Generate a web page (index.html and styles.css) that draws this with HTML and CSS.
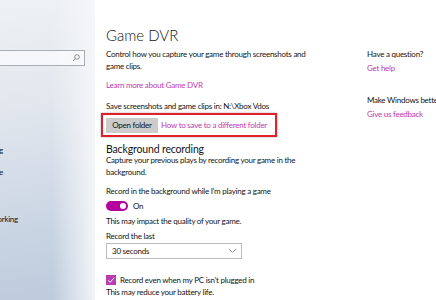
FILE: index.html
```html
<!DOCTYPE html>
<html lang="en">
<head>
  <meta charset="UTF-8">
  <title>Game DVR</title>
  <link rel="stylesheet" href="styles.css">
</head>
<body>
  <div class="window">
    <nav class="side">
      <div class="search">
        <svg width="8" height="8" viewBox="0 0 8 8"><circle cx="5" cy="3" r="2.3" fill="none" stroke="#777" stroke-width="0.8"/><path d="M3.3 4.7 L1 7" stroke="#777" stroke-width="0.9"/></svg>
      </div>
      <ul class="menu">
        <li class="m1"><span>Broadcasting</span></li>
        <li class="m2"><span>Game Mode</span></li>
        <li class="m3"><span>Xbox Networking</span></li>
      </ul>
    </nav>

    <main class="content">
      <h1>Game DVR</h1>
      <p class="desc">Control how you capture your game through screenshots and game clips.</p>
      <a class="link learn">Learn more about Game DVR</a>
      <p class="save">Save screenshots and game clips in: N:\Xbox Vdos</p>
      <div class="highlight">
        <button class="btn">Open folder</button>
        <a class="link">How to save to a different folder</a>
      </div>
      <h2>Background recording</h2>
      <p class="desc2">Capture your previous plays by recording your game in the background.</p>
      <p class="label">Record in the background while I'm playing a game</p>
      <div class="toggle-row">
        <span class="toggle"><span class="knob"></span></span>
        <span>On</span>
      </div>
      <p class="note">This may impact the quality of your game.</p>
      <p class="label2">Record the last</p>
      <div class="select">
        <span>30 seconds</span>
        <svg width="9" height="6" viewBox="0 0 9 6"><path d="M1 1 L4.5 4.5 L8 1" fill="none" stroke="#777" stroke-width="0.8"/></svg>
      </div>
      <div class="check-row">
        <span class="check"><svg width="10" height="10" viewBox="0 0 10 10"><path d="M2 5.2 L4.1 7.3 L8.2 2.8" fill="none" stroke="#fff" stroke-width="1"/></svg></span>
        <span>Record even when my PC isn't plugged in</span>
      </div>
      <p class="note2">This may reduce your battery life.</p>
    </main>

    <aside class="help">
      <p class="q">Have a question?</p>
      <a class="link">Get help</a>
      <p class="q q2">Make Windows better</p>
      <a class="link">Give us feedback</a>
    </aside>
  </div>
</body>
</html>
```

FILE: styles.css
```css
* {
  box-sizing: border-box;
}

body {
  margin: 0;
  font-family: Lato, "Noto Sans", sans-serif;
  font-size: 8px;
  letter-spacing: -0.25px;
  color: #141414;
  background: #fff;
  overflow: hidden;
}

p {
  margin: 0;
  line-height: 12px;
}

.window {
  display: flex;
  width: 436px;
  height: 300px;
}

/* left navigation, mostly cut off */
.side {
  width: 95px;
  flex-shrink: 0;
  background:
    linear-gradient(90deg, rgba(255,255,255,0) 55%, rgba(245,247,249,0.95) 100%),
    linear-gradient(170deg, #eef1f4 0%, #e2e7ee 35%, #c9d4e3 75%, #bccadb 100%);
  padding-top: 50px;
  overflow: hidden;
}

.search {
  width: 87px;
  height: 16px;
  margin-left: -2px;
  border: 1px solid #a9aeb4;
  background: rgba(248,249,251,0.85);
  display: flex;
  align-items: center;
  justify-content: flex-end;
  padding-right: 4px;
}

.menu {
  list-style: none;
  margin: 0;
  padding: 0;
}

.menu li {
  display: flex;
  justify-content: flex-end;
  width: 3px;
  white-space: nowrap;
  line-height: 12px;
}

.m1 {
  margin-top: 78px;
}

.m2 {
  margin-top: 10px;
}

.m3 {
  margin-top: 35px;
  width: 18px !important;
}

/* main column */
.content {
  width: 272px;
  flex-shrink: 0;
  padding: 26px 0 0 11px;
}

h1 {
  margin: 0;
  font-size: 15px;
  font-weight: 300;
  letter-spacing: 0;
  line-height: 18px;
}

.desc {
  margin-top: 4px;
  width: 205px;
}

.link {
  color: #c239b3;
  cursor: pointer;
}

.learn {
  display: block;
  margin-top: 7px;
  line-height: 12px;
}

.save {
  margin-top: 9px;
}

.highlight {
  display: flex;
  align-items: center;
  gap: 3px;
  width: 176px;
  height: 24px;
  margin: 1px 0 0 -5px;
  padding-left: 3px;
  border: 2px solid #e2202c;
  box-shadow: 0 0 2px rgba(0,0,0,0.35);
  white-space: nowrap;
}

.btn {
  font-family: inherit;
  font-size: 8px;
  letter-spacing: -0.25px;
  color: #111;
  background: #cccccc;
  border: none;
  width: 52px;
  height: 15px;
  padding: 0;
  white-space: nowrap;
}

h2 {
  margin: 5px 0 0;
  font-size: 10.5px;
  font-weight: 400;
  letter-spacing: -0.15px;
  line-height: 14px;
}

.desc2 {
  margin-top: -2px;
  width: 215px;
}

.label {
  margin-top: 7px;
}

.toggle-row {
  display: flex;
  align-items: center;
  gap: 5px;
  margin-top: 3px;
  height: 11px;
}

.toggle {
  width: 22px;
  height: 10px;
  border-radius: 5px;
  background: #b4009e;
  display: flex;
  align-items: center;
  justify-content: flex-end;
  padding-right: 2px;
}

.knob {
  width: 6px;
  height: 6px;
  border-radius: 50%;
  background: #fff;
}

.note {
  margin-top: 4px;
}

.label2 {
  margin-top: 3px;
}

.select {
  display: flex;
  align-items: center;
  justify-content: space-between;
  width: 136px;
  height: 16px;
  margin-top: 1px;
  padding: 0 4px 0 5px;
  border: 1px solid #bdbdbd;
}

.check-row {
  display: flex;
  align-items: center;
  gap: 4px;
  margin-top: 15px;
  height: 11px;
}

.check {
  width: 10px;
  height: 10px;
  background: #b83db3;
  display: flex;
}

.note2 {
  margin-top: 1px;
}

/* right help column */
.help {
  padding-top: 48px;
  white-space: nowrap;
}

.help .link {
  display: block;
  margin-top: 2px;
  line-height: 12px;
}

.help .q2 {
  margin-top: 20px;
}
```
